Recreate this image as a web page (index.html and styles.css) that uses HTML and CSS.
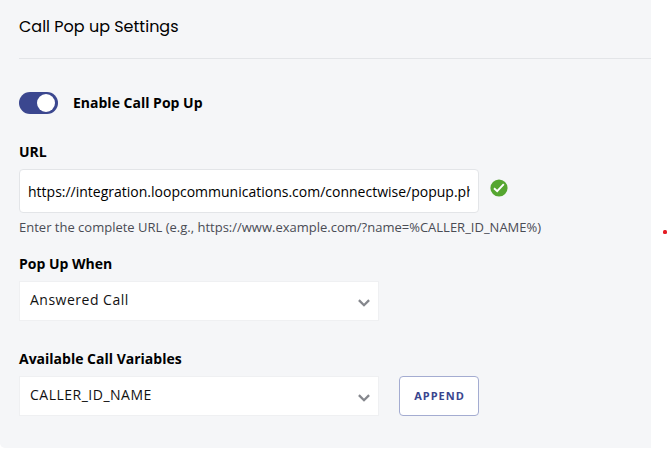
FILE: index.html
```html
<!DOCTYPE html>
<html lang="en">
<head>
<meta charset="utf-8">
<title>Call Pop up Settings</title>
<link rel="stylesheet" href="styles.css">
</head>
<body>
<main class="page">
  <section class="panel">
    <h1 class="title">Call Pop up Settings</h1>
    <div class="toggle-row">
      <span class="toggle"><span class="knob"></span></span>
      <span class="label">Enable Call Pop Up</span>
    </div>
    <div class="label url-label">URL</div>
    <div class="url-row">
      <div class="url-input"><div class="url-text">https://integration.loopcommunications.com/connectwise/popup.php</div></div>
      <svg class="check" width="18" height="18" viewBox="0 0 18 18"><circle cx="9" cy="9" r="8.6" fill="#55a630"/><path d="M4 9.200l3.200 2.900 6.600-7" fill="none" stroke="#fff" stroke-width="1.9"/></svg>
    </div>
    <div class="hint">Enter the complete URL (e.g., https://www.example.com/?name=%CALLER_ID_NAME%)</div>
    <div class="label when-label">Pop Up When</div>
    <div class="select"><span class="answered">Answered Call</span><svg class="chevron" width="12" height="8" viewBox="0 0 12 8"><path d="M.9 1.1L6 6.2l5.100-5.100" fill="none" stroke="#85878d" stroke-width="2.300"/></svg></div>
    <div class="label variables-label">Available Call Variables</div>
    <div class="variables-row">
      <div class="select"><span class="variable">CALLER_ID_NAME</span><svg class="chevron" width="12" height="8" viewBox="0 0 12 8"><path d="M.9 1.1L6 6.2l5.100-5.100" fill="none" stroke="#85878d" stroke-width="2.300"/></svg></div>
      <button class="append" type="button">APPEND</button>
    </div>
  </section>
  <aside class="margin"><span class="dot"></span></aside>
</main>
</body>
</html>
```
FILE: styles.css
```css
* { box-sizing: border-box; }
body { margin: 0; background: #fff; color: #000; font-family: "Open Sans", sans-serif; font-size: 14px; overflow: hidden; }
.page { display: flex; height: 456px; }
.panel { width: 651px; height: 448px; padding-left: 19px; background: #f5f6f8; border-bottom-left-radius: 5px; }
.title { margin: 0; height: 59px; padding-top: 15px; border-bottom: 1px solid #e3e5e8; font: 400 16px/24px Poppins, Inter, sans-serif; white-space: nowrap; }
.toggle-row { display: flex; align-items: center; height: 22px; margin-top: 33px; }
.toggle { display: flex; justify-content: flex-end; width: 39px; height: 22px; margin-right: 15px; padding: 2px 3px 2px 2px; border-radius: 11px; background: #3b478f; }
.knob { width: 18px; height: 18px; border-radius: 50%; background: #fff; }
.label { font-weight: 700; line-height: 20px; white-space: nowrap; }
.url-label { margin-top: 28px; height: 27px; }
.url-row { display: flex; gap: 11px; height: 44px; }
.url-input { width: 460px; height: 44px; padding: 0 8px; border: 1px solid #e3e5e8; border-radius: 4px; background: #fff; }
.url-text { overflow: hidden; height: 42px; font-size: 14px; line-height: 44px; white-space: nowrap; }
.check { margin-top: 10px; }
.hint { height: 41px; padding-top: 4px; color: #4a4c55; font-size: 13px; line-height: 20px; white-space: nowrap; }
.when-label { height: 27px; }
.select { display: flex; justify-content: space-between; width: 360px; height: 40px; padding: 0 8px 0 10px; border: 1px solid #eff0f2; background: #fff; color: #111; line-height: 35px; letter-spacing: .5px; }
.chevron { margin-top: 17px; }
.variables-label { height: 27px; margin-top: 28px; }
.variables-row { display: flex; gap: 20px; }
.append { width: 80px; height: 40px; padding: 0 0 0 1px; border: 1px solid #a4acd1; border-radius: 4px; background: #fff; color: #39458e; font: 700 11px/38px "Open Sans", sans-serif; letter-spacing: 1px; }
.margin { padding: 230px 0 0 12px; }
.dot { display: block; width: 4px; height: 4px; border-radius: 1.5px; background: #e51c23; }
```
